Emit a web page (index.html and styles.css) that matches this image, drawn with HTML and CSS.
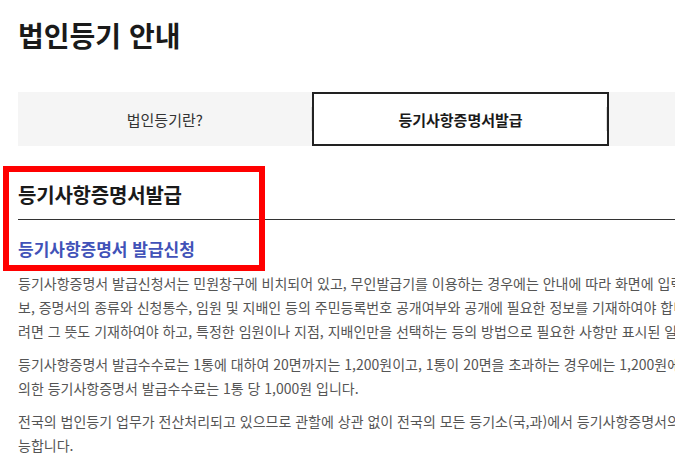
FILE: index.html
```html
<!DOCTYPE html>
<html lang="ko">
<head>
  <title>법인등기 안내</title>
  <meta charset="UTF-8">
  <link rel="stylesheet" href="styles.css">
</head>
<body>
  <div id="guide-container">
    <h2 class="page-title">법인등기 안내</h2>

    <ul class="tab-list">
      <li class="tab-item"><a href="#">법인등기란?</a></li>
      <li class="tab-item active"><a href="#">등기사항증명서발급</a></li>
      <li class="tab-item"><a href="#">등기신청절차</a></li>
    </ul>

    <div class="section">
      <div class="highlight"></div>
      <h3 class="section-title">등기사항증명서발급</h3>
      <h4 class="sub-title">등기사항증명서 발급신청</h4>
      <p>등기사항증명서 발급신청서는 민원창구에 비치되어 있고, 무인발급기를 이용하는 경우에는 안내에 따라 화면에 입력하면 됩니다. 신청서에는 상호 등의 정보, 증명서의 종류와 신청통수, 임원 및 지배인 등의 주민등록번호 공개여부와 공개에 필요한 정보를 기재하여야 합니다. 일부 사항만 발급하는 증명을 받으려면 그 뜻도 기재하여야 하고, 특정한 임원이나 지점, 지배인만을 선택하는 등의 방법으로 필요한 사항만 표시된 일부사항증명서를 받을 수 있습니다.</p>
      <p>등기사항증명서 발급수수료는 1통에 대하여 20면까지는 1,200원이고, 1통이 20면을 초과하는 경우에는 1,200원에 1면마다 50원을 가산, 무인발급기에 의한 등기사항증명서 발급수수료는 1통 당 1,000원 입니다.</p>
      <p>전국의 법인등기 업무가 전산처리되고 있으므로 관할에 상관 없이 전국의 모든 등기소(국,과)에서 등기사항증명서의 발급 신청을 할 수 있으며, 어디든 가능합니다.</p>
    </div>
  </div>
</body>
</html>
```

FILE: styles.css
```css
* {
  box-sizing: border-box;
}

html, body {
  overflow: hidden;
}

body {
  margin: 0;
  padding: 0;
  font-family: "Noto Sans CJK KR", "Noto Sans", sans-serif;
  background: #ffffff;
  color: #555555;
}

#guide-container {
  width: 903px;
  padding: 16px 0 0 18px;
}

.page-title {
  margin: 0 0 38px 0;
  font-size: 28px;
  line-height: 38px;
  font-weight: 700;
  color: #1a1a1a;
}

.tab-list {
  display: flex;
  margin: 0;
  padding: 0;
  list-style: none;
}

.tab-item {
  position: relative;
  flex: 1 1 0;
  height: 54px;
  background: #f5f5f5;
}

.tab-item a {
  display: flex;
  align-items: center;
  justify-content: center;
  height: 100%;
  font-size: 15px;
  color: #333333;
  text-decoration: none;
}

.tab-item::after {
  content: '';
  position: absolute;
  right: 0;
  top: 15px;
  width: 1px;
  height: 24px;
  background: #dddddd;
}

.tab-item.active {
  background: #ffffff;
  border: 2px solid #222222;
}

.tab-item.active::after {
  top: 13px;
}

.tab-item.active a {
  font-weight: 700;
  color: #1a1a1a;
}

.section {
  position: relative;
  margin-top: 34px;
}

/* red guide box over the heading */
.highlight {
  position: absolute;
  left: -15px;
  top: -14px;
  width: 262px;
  height: 105px;
  border: 6px solid #ff0000;
}

.section-title {
  margin: 0;
  padding-bottom: 9px;
  font-size: 20px;
  line-height: 30px;
  font-weight: 700;
  letter-spacing: -0.2px;
  color: #1a1a1a;
  border-bottom: 1px solid #333333;
}

.sub-title {
  margin: 16px 0 9px 0;
  font-size: 17px;
  line-height: 26px;
  font-weight: 700;
  color: #4152b8;
}

.section p {
  margin: 0 0 9px 0;
  font-size: 14px;
  line-height: 24px;
}
```
